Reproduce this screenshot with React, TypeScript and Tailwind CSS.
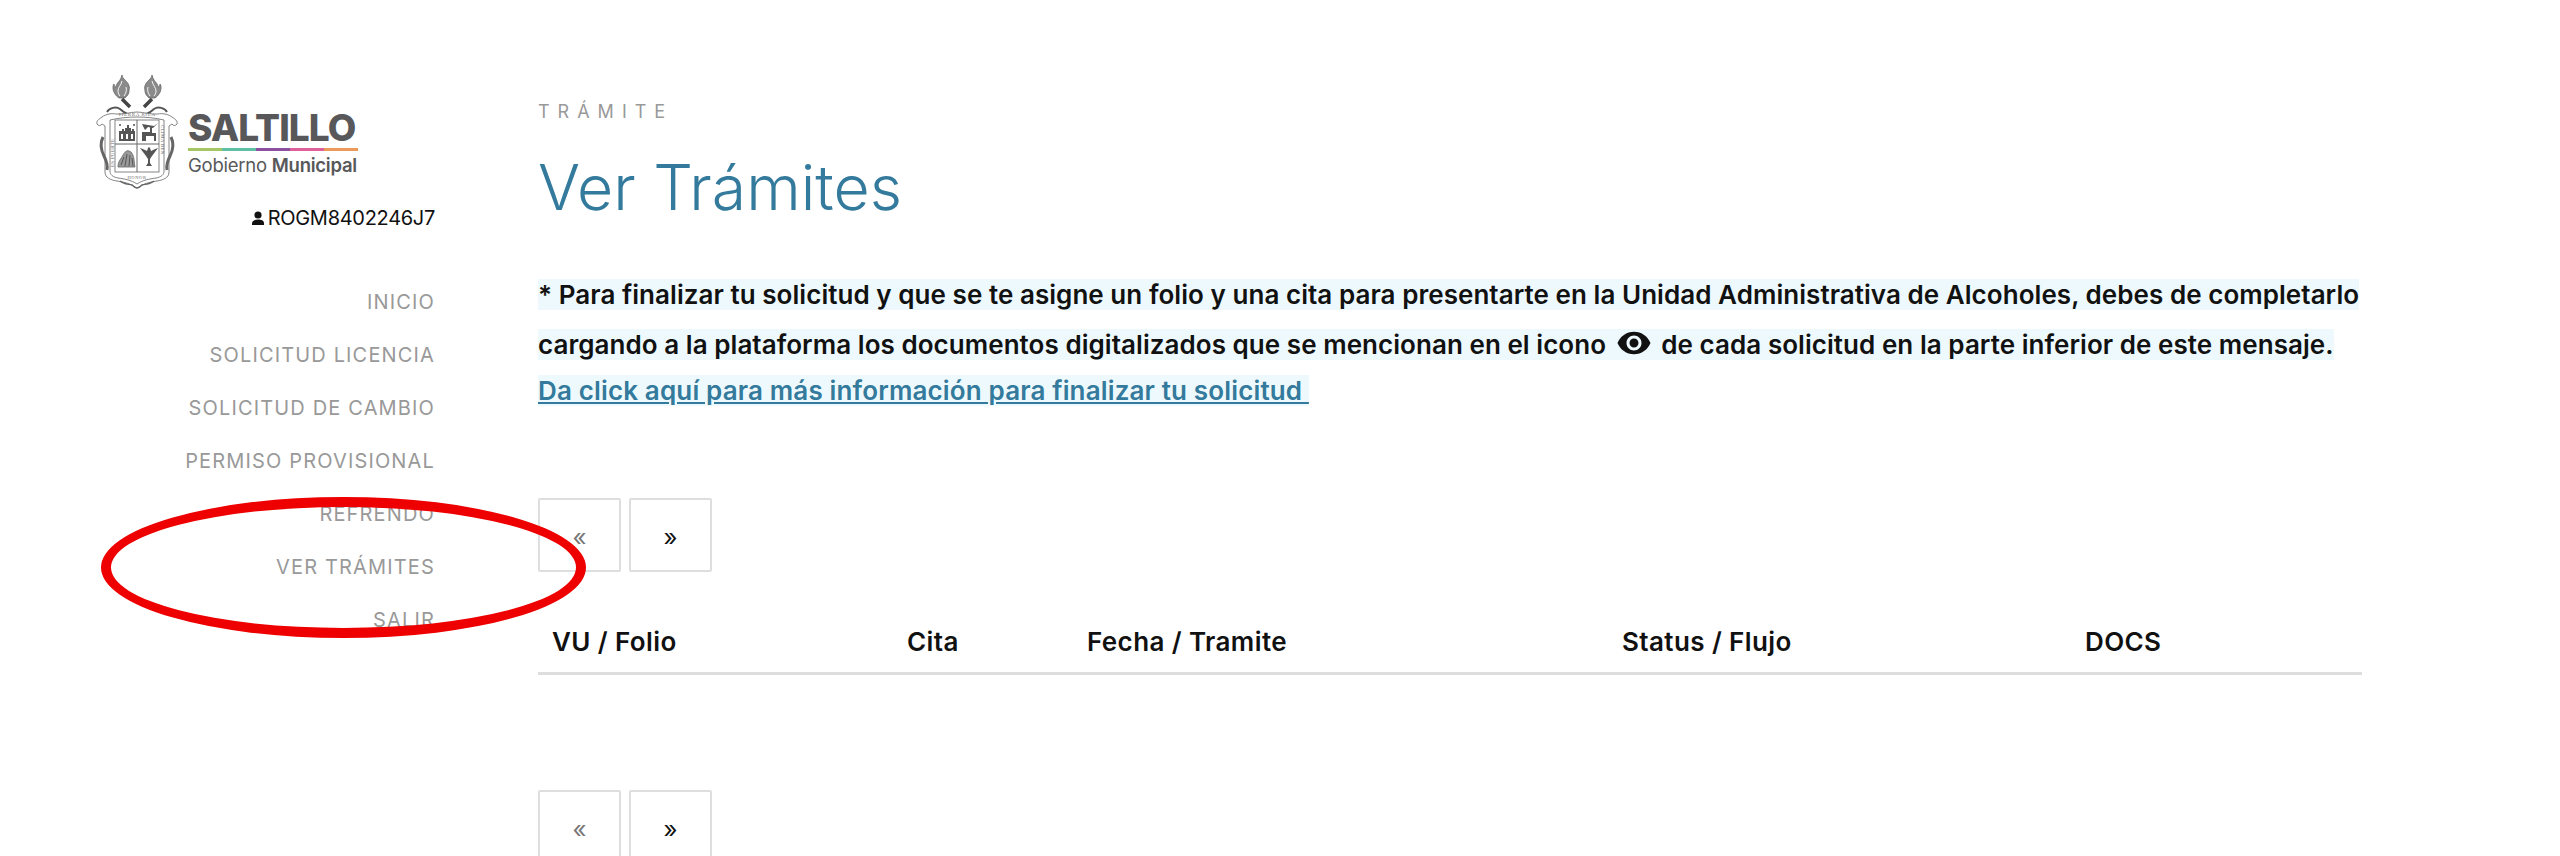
const navItems = ['INICIO', 'SOLICITUD LICENCIA', 'SOLICITUD DE CAMBIO', 'PERMISO PROVISIONAL', 'REFRENDO', 'VER TRÁMITES', 'SALIR'];
const columns = ['VU / Folio', 'Cita', 'Fecha / Tramite', 'Status / Flujo', 'DOCS'];
const stripes = ['bg-[#a5c663]', 'bg-[#5fbfa5]', 'bg-[#8a4f9e]', 'bg-[#dd5f9c]', 'bg-[#eb9a5c]'];

function Crest() {
  return (
    <svg width="82" height="116" viewBox="0 0 82 116" fill="none" stroke="#666" strokeWidth="0.8">
      {/* torches */}
      <path d="M26 0c0 4 6 6 7 11 1 2 0 3 0 5 0 3-2 5-4 7h-6c-3-2-6-6-6-10 0-1 0-3 1-4 0 2 1 3 2 3 0-4 5-6 6-12z" fill="#8a8a8a" />
      <path d="M56 0c0 4-6 6-7 11-1 2 0 3 0 5 0 3 2 5 4 7h6c3-2 6-6 6-10 0-1 0-3-1-4 0 2-1 3-2 3 0-4-5-6-6-12z" fill="#8a8a8a" />
      <path d="M26 6c-1 5-4 6-4 10 0 2 1 4 2 5M30 12c1 3 0 6-2 9M56 6c1 5 4 6 4 10 0 2-1 4-2 5M52 12c-1 3 0 6 2 9" stroke="#fff" strokeWidth="0.9" />
      <path d="M26 24l8 8M56 24l-8 8" stroke="#444" strokeWidth="3.5" />
      <path d="M11 37c2-4 9-6 13-3 2 2 5 4 8 5M71 37c-2-4-9-6-13-3-2 2-5 4-8 5" stroke="#555" strokeWidth="1.8" />
      {/* frame */}
      <path d="M6 42c4-3 10-4 14-3 7 1 14-2 21-2s14 3 21 2c4-1 10 0 14 3 3 2 6 4 5 7-1 2-4 2-5 0l-3 2v46c0 6-6 8-12 9-8 1-14 3-20 7-6-4-12-6-20-7-6-1-12-3-12-9V51l-3-2c-1 2-4 2-5 0-1-3 2-5 5-7z" fill="#fff" />
      <path d="M7 62c-3 6-2 13 1 19 2 4 4 9 3 14M75 62c3 6 2 13-1 19-2 4-4 9-3 14" stroke="#666" strokeWidth="3" />
      <path d="M14 45c8-2 18-3 27-3s19 1 27 3v51c0 4-3 6-8 7-7 1-13 2-19 6-6-4-12-5-19-6-5-1-8-3-8-7z" />
      <rect x="19" y="45" width="44" height="52" />
      <path d="M41 45v52M19 69h44" strokeWidth="1" />
      {/* motto */}
      <g fill="#666" stroke="none" fontFamily="'Liberation Serif', serif" fontSize="5">
        <text x="41" y="41" textAnchor="middle" letterSpacing="0.6">TIERRA RICA</text>
        <text transform="translate(17.5 92) rotate(-90)" letterSpacing="0.3">ES PUERTE</text>
        <text transform="translate(65 50) rotate(90)" letterSpacing="0.3">CLIMA BEN</text>
        <text x="41" y="104" textAnchor="middle" fontSize="4.5" letterSpacing="0.6">HONOR</text>
      </g>
      <g fill="#555" stroke="none">
        {/* towers */}
        <path d="M23 66V56h3v-2h2v2h1v-3h2v-3h2v3h2v3h1v-2h2v2h1v10zM25 59v5h2v-5zM30 59v5h2v-5zM35 59v5h2v-5z" fillRule="evenodd" />
        <circle cx="24" cy="50" r="1" />
        <circle cx="38" cy="50" r="1" />
        {/* llama and pennant */}
        <path d="M46 66v-9h8v-6h2v7h4v8h-2v-5h-8v5z" />
        <path d="M46 49l12 2 4-3-5 5-5-1-3 3z" />
        {/* eagle */}
        <path d="M52 88v-4l-2-3-6-8c3 1 5 2 7 3l1-3 1-1 1 1 1 3c2-1 4-2 7-3l-6 8-2 3v4l2 3h-6z" />
      </g>
      {/* mountain */}
      <path d="M22 92c0-6 3-8 5-12 3-5 5-5 8-3 3 3 3 8 4 15z" fill="#999" />
      <path d="M25 90l3-8M29 91l2-12M33 91l1-11M37 91l-1-8" stroke="#444" strokeWidth="0.8" />
      <path d="M24 106c3 3 8 3 12 4 2 2 3 3 5 3s3-1 5-3c4-1 9-1 12-4" strokeWidth="1.4" />
    </svg>
  );
}

function Logo() {
  return (
    <div className="flex items-start gap-[10px]">
      <Crest />
      <div className="mt-[39px] w-[170px] text-[#58585a]">
        <div className="h-[27px] whitespace-nowrap text-[37px] leading-[27px] font-extrabold tracking-[-0.9px]">SALTILLO</div>
        <div className="mt-[7px] flex h-[3px]">
          {stripes.map((color) => (
            <span key={color} className={`flex-1 ${color}`} />
          ))}
        </div>
        <div className="mt-[5px] whitespace-nowrap text-[18.5px] leading-[18px] tracking-[-0.25px]">
          Gobierno <span className="font-semibold">Municipal</span>
        </div>
      </div>
    </div>
  );
}

function Pager() {
  return (
    <div className="flex gap-[8px] text-[24px]">
      <span className="flex h-[74px] w-[83px] items-center justify-center rounded-[2px] border-2 border-[#dedede] pt-[6px] text-[#777]">«</span>
      <span className="flex h-[74px] w-[83px] items-center justify-center rounded-[2px] border-2 border-[#dedede] pt-[6px] text-[#111]">»</span>
    </div>
  );
}

export default function App() {
  return (
    <div className="relative h-[856px] overflow-hidden bg-white font-['Inter',sans-serif]">
      <div className="flex">
        <aside className="w-[435px] shrink-0 pt-[75px]">
          <div className="pl-[96px]">
            <Logo />
          </div>
          <div className="mt-[15px] flex items-center justify-end gap-[4px] text-[20px] leading-[24px] tracking-[-0.3px] text-[#111]">
            <svg width="12" height="14" viewBox="0 0 12 14" fill="#111">
              <circle cx="6" cy="4" r="3.6" />
              <path d="M0 14v-1.5C0 9.5 3 8.6 6 8.6s6 .9 6 3.9V14z" />
            </svg>
            ROGM8402246J7
          </div>
          <nav className="mt-[57px] flex flex-col gap-[23px] text-right text-[20px] leading-[30px] tracking-[1.15px] text-[#999]">
            {navItems.map((item) => (
              <a key={item}>{item}</a>
            ))}
          </nav>
        </aside>

        <main className="ml-[103px] w-[1824px] pt-[100px]">
          <div className="text-[18px] leading-[24px] tracking-[8px] text-[#999]">TRÁMITE</div>
          <h1 className="mt-[27px] text-[62.5px] leading-[72px] font-light text-[#337a9c]">Ver Trámites</h1>

          <div className="mt-[47px] text-[26px] font-semibold text-[#111]">
            <p className="leading-[50px] tracking-[0.05px]">
              <span className="bg-[#eef9fd] box-decoration-clone">
                * Para finalizar tu solicitud y que se te asigne un folio y una cita para presentarte en la Unidad Administrativa de Alcoholes, debes de completarlo
                <br />
                cargando a la plataforma los documentos digitalizados que se mencionan en el icono{' '}
                <svg className="mx-[3px] inline-block -translate-y-[4px]" width="36" height="36" viewBox="0 0 24 24" fill="#111">
                  <path d="M12 4.5C7 4.5 2.73 7.61 1 12c1.73 4.39 6 7.5 11 7.5s9.27-3.11 11-7.5c-1.73-4.39-6-7.5-11-7.5zM12 17c-2.76 0-5-2.24-5-5s2.24-5 5-5 5 2.24 5 5-2.24 5-5 5zm0-8c-1.66 0-3 1.34-3 3s1.34 3 3 3 3-1.34 3-3-1.34-3-3-3z" />
                </svg>{' '}
                de cada solicitud en la parte inferior de este mensaje.
              </span>
            </p>
            <a className="block leading-[42px] tracking-[0.15px] text-[#337a9c] underline">
              <span className="bg-[#eef9fd]">Da click aquí para más información para finalizar tu solicitud&nbsp;</span>
            </a>
          </div>

          <div className="mt-[86px]">
            <Pager />
          </div>

          <div className="mt-[52px] grid grid-cols-[355px_180px_535px_463px_291px] border-b-[3px] border-[#dedede] pb-[12px] pl-[14px] text-[26px] leading-[36px] font-semibold tracking-[0.4px] text-[#111]">
            {columns.map((col) => (
              <div key={col}>{col}</div>
            ))}
          </div>

          <div className="mt-[115px]">
            <Pager />
          </div>
        </main>
      </div>

      {/* hand drawn mark over the menu */}
      <div className="pointer-events-none absolute top-[497px] left-[101px] h-[141px] w-[485px] rounded-[50%] border-[10px] border-[#ee0000]" />
    </div>
  );
}
